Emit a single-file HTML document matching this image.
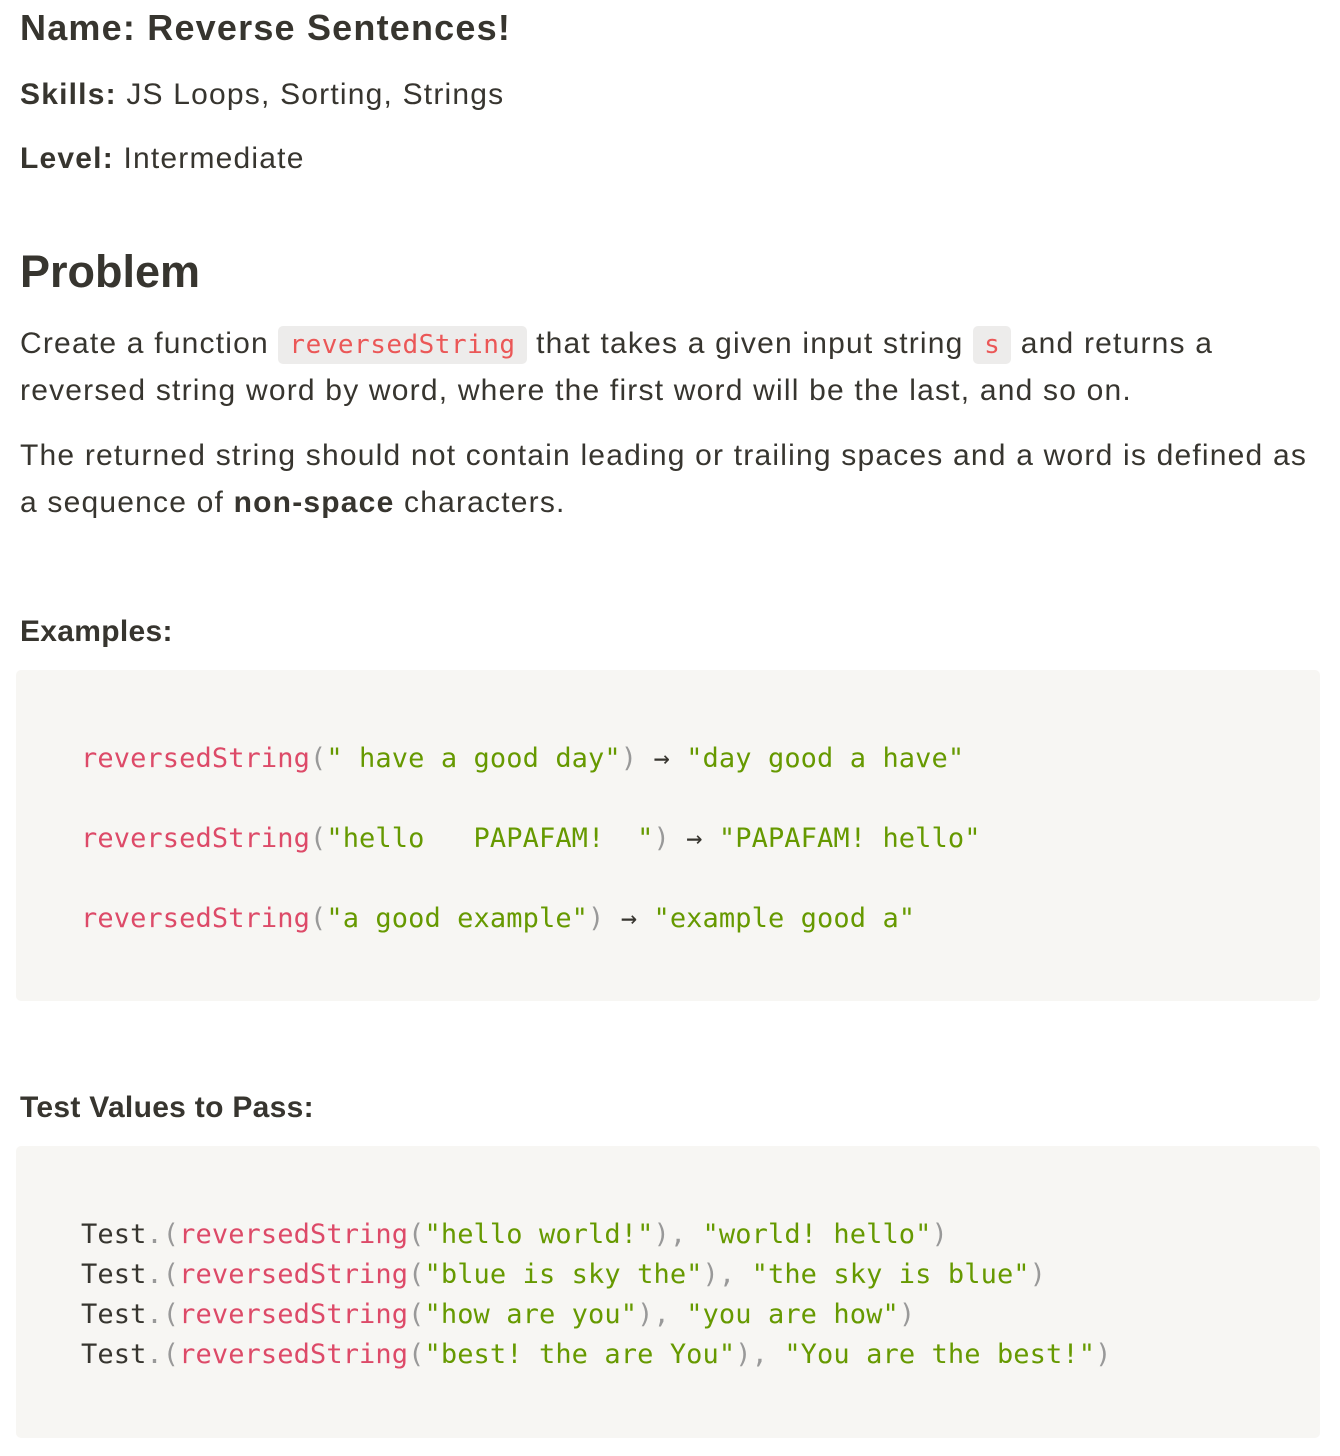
<!DOCTYPE html>
<html><head><meta charset="utf-8"><style>
body{margin:0;background:#fff;color:#37352f;font-family:"Liberation Sans",Arial,sans-serif;width:1340px;height:1456px;position:relative;overflow:hidden}
.a{position:absolute;left:20px;white-space:nowrap}
.t{font-size:30px;line-height:48px;letter-spacing:1.2px}
b{font-weight:700}
.ic{font-family:"DejaVu Sans Mono",monospace;font-size:26px;letter-spacing:0.5px;color:#eb5757;background:#edeceb;border-radius:5px;padding:4px 11px}
.blk{position:absolute;left:16px;width:1304px;background:#f7f6f3;border-radius:5px}
.code{position:absolute;left:81px;font-family:"DejaVu Sans Mono",monospace;font-size:27px;letter-spacing:0.1px;white-space:pre;color:#37352f}
.f{color:#dd4a68}.s{color:#669900}.p{color:#999}
</style></head><body>
<div class="a" style="top:6px;font-size:36px;font-weight:700;line-height:44px;letter-spacing:1.2px">Name: Reverse Sentences!</div>
<div class="a t" style="top:71px"><b>Skills:</b> JS Loops, Sorting, Strings</div>
<div class="a t" style="top:135px"><b>Level:</b> Intermediate</div>
<div class="a" style="top:244px;font-size:45px;font-weight:700;line-height:56px">Problem</div>
<div class="a t" style="top:320px">Create a function <span class="ic">reversedString</span> that takes a given input string <span class="ic">s</span> and returns a</div>
<div class="a t" style="top:367px">reversed string word by word, where the first word will be the last, and so on.</div>
<div class="a t" style="top:432px">The returned string should not contain leading or trailing spaces and a word is defined as</div>
<div class="a t" style="top:479px">a sequence of <b>non-space</b> characters.</div>
<div class="a" style="top:615px;font-size:30px;font-weight:700;line-height:34px;letter-spacing:0.3px">Examples:</div>
<div class="blk" style="top:670px;height:331px"></div>
<div class="code" style="top:740px;line-height:38px"><span class="f">reversedString</span><span class="p">(</span><span class="s">" have a good day"</span><span class="p">)</span> → <span class="s">"day good a have"</span></div>
<div class="code" style="top:820px;line-height:38px"><span class="f">reversedString</span><span class="p">(</span><span class="s">"hello   PAPAFAM!  "</span><span class="p">)</span> → <span class="s">"PAPAFAM! hello"</span></div>
<div class="code" style="top:900px;line-height:38px"><span class="f">reversedString</span><span class="p">(</span><span class="s">"a good example"</span><span class="p">)</span> → <span class="s">"example good a"</span></div>
<div class="a" style="top:1091px;font-size:30px;font-weight:700;line-height:34px;letter-spacing:0.3px">Test Values to Pass:</div>
<div class="blk" style="top:1146px;height:292px"></div>
<div class="code" style="top:1215px;line-height:40px">Test<span class="p">.(</span><span class="f">reversedString</span><span class="p">(</span><span class="s">"hello world!"</span><span class="p">), </span><span class="s">"world! hello"</span><span class="p">)</span>
Test<span class="p">.(</span><span class="f">reversedString</span><span class="p">(</span><span class="s">"blue is sky the"</span><span class="p">), </span><span class="s">"the sky is blue"</span><span class="p">)</span>
Test<span class="p">.(</span><span class="f">reversedString</span><span class="p">(</span><span class="s">"how are you"</span><span class="p">), </span><span class="s">"you are how"</span><span class="p">)</span>
Test<span class="p">.(</span><span class="f">reversedString</span><span class="p">(</span><span class="s">"best! the are You"</span><span class="p">), </span><span class="s">"You are the best!"</span><span class="p">)</span></div>
</body></html>
